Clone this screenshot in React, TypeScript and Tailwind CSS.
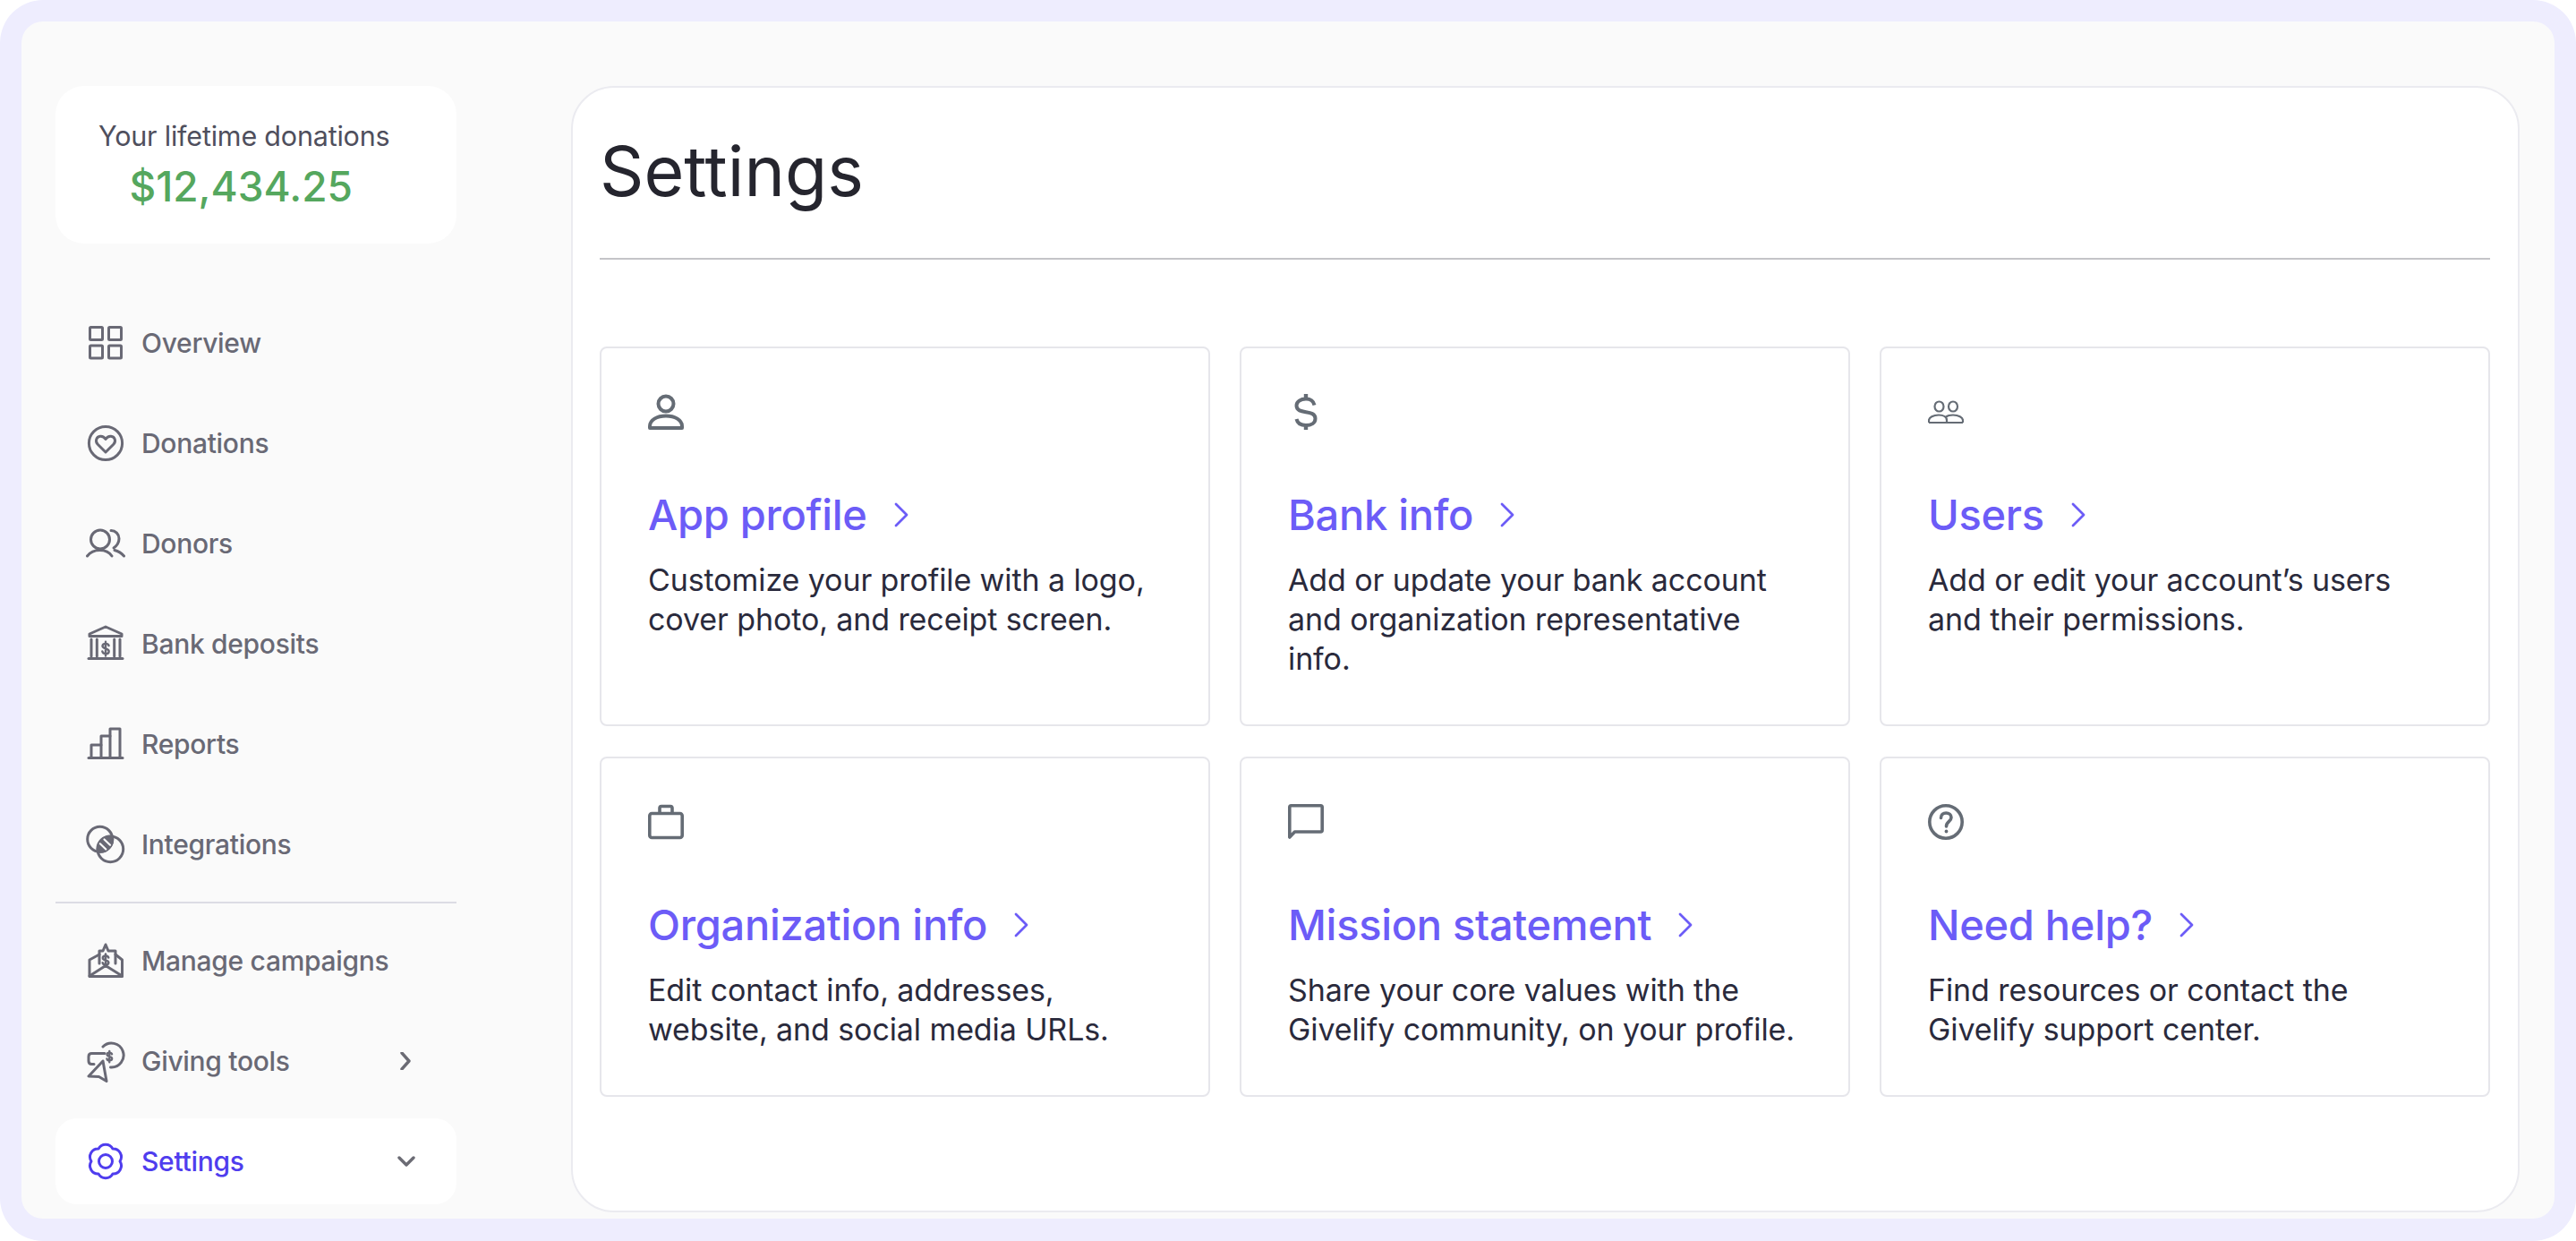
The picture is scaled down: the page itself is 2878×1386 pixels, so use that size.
import { ReactNode } from 'react'

const dollarPath =
  'M25.6 24.6C25.2 23 24 22.4 22 22.4C19.8 22.4 18.5 23.5 18.5 25.1C18.5 28.6 25.7 27.2 25.7 30.9C25.7 32.5 24.2 33.6 22 33.6C19.8 33.6 18.7 32.6 18.3 31M22 20.2V36'

const NavIcon = ({ children }: { children: ReactNode }) => (
  <svg
    viewBox="0 0 44 48"
    className="w-11 h-12 shrink-0"
    fill="none"
    stroke="currentColor"
    strokeWidth="3"
    strokeLinecap="round"
    strokeLinejoin="round"
  >
    {children}
  </svg>
)

const CardIcon = ({ children, stroke = '3.6' }: { children: ReactNode; stroke?: string }) => (
  <svg
    viewBox="0 0 40 40"
    className="w-10 h-10 text-[#656c75]"
    fill="none"
    stroke="currentColor"
    strokeWidth={stroke}
    strokeLinejoin="round"
  >
    {children}
  </svg>
)

const Chevron = () => (
  <svg viewBox="0 0 16 28" className="w-4 h-7 ml-[30px] shrink-0" fill="none" stroke="#6c5cf7" strokeWidth="2.8" strokeLinecap="round" strokeLinejoin="round">
    <path d="M2 2L14 14L2 26" />
  </svg>
)

const navTop = [
  {
    label: 'Overview',
    icon: (
      <>
        <rect x="4.5" y="6.5" width="14" height="14" rx="1" />
        <rect x="25.5" y="6.5" width="14" height="14" rx="1" />
        <rect x="4.5" y="27" width="14" height="14" rx="1" />
        <rect x="25.5" y="27" width="14" height="14" rx="1" />
      </>
    ),
  },
  {
    label: 'Donations',
    icon: (
      <>
        <circle cx="22" cy="24" r="18.6" />
        <path d="M22 34L13.2 25.3C10 22 11.5 16.6 16 16.2C18.6 16 20.6 17.2 22 19.4C23.4 17.2 25.4 16 28 16.2C32.5 16.6 34 22 30.8 25.3Z" />
      </>
    ),
  },
  {
    label: 'Donors',
    icon: (
      <>
        <circle cx="16" cy="19.5" r="10.5" />
        <path d="M1.5 38C5 33.5 10 31.5 15.5 31.5C21 31.5 26 33.5 29 38" />
        <path d="M28 9.5C33 9.5 37 13.5 37 18.5C37 23 34.5 26.5 31 29" />
        <path d="M32 31.5C36 32.5 39.5 34.5 42.5 38" />
      </>
    ),
  },
  {
    label: 'Bank deposits',
    icon: (
      <>
        <path d="M4 15.5V13L22 5L40 13V15.5Z" />
        <path d="M6 19V38M12.3 19V38M31.7 19V38M38 19V38" />
        <path d="M3 40.5H41" />
        <path d={dollarPath} transform="translate(0 1.5)" strokeWidth="2.4" />
      </>
    ),
  },
  {
    label: 'Reports',
    icon: (
      <>
        <path d="M3 39.5H41" />
        <path d="M6 39V25H17V39" />
        <path d="M17 25V15H27V39" />
        <path d="M27 15V7H38V39" />
      </>
    ),
  },
  {
    label: 'Integrations',
    icon: (
      <>
        <circle cx="15.7" cy="18.3" r="14" />
        <circle cx="27.3" cy="29.3" r="14.4" />
        <path d="M29.4 15.5A14 14 0 0 1 13.6 32.1A14 14 0 0 1 29.4 15.5Z" fill="currentColor" />
        <path d="M20.5 18.5L27 24.7M15.8 23.3L22.3 29.5" stroke="#fafafa" strokeWidth="2.2" />
      </>
    ),
  },
]

const navBottom = [
  {
    label: 'Manage campaigns',
    icon: (
      <>
        <path d="M15 27V13H19L22 6L25 13H33V27" />
        <path d="M15 17L4 23V41.5H40.5V23L33 17" />
        <path d="M4 41L22 29.5L40.5 41" />
        <path d={dollarPath} transform="translate(2.2 -1.7) scale(0.9)" strokeWidth="2.8" />
      </>
    ),
  },
  {
    label: 'Giving tools',
    icon: (
      <>
        <path d="M19 8A13.5 13.5 0 1 1 27.5 31" />
        <path d="M21 15.5H6.5Q3 15.5 3 19V24Q3 27.5 6.5 27.5H9" />
        <path d="M19 24L3 41L14.5 41.5L23 46.5Z" />
        <path d={dollarPath} transform="translate(9.1 -2.8) scale(0.78)" strokeWidth="3" />
      </>
    ),
    chevron: 'right',
  },
]

const cards = [
  {
    title: 'App profile',
    text: 'Customize your profile with a logo, cover photo, and receipt screen.',
    icon: (
      <CardIcon>
        <circle cx="20" cy="11" r="8.5" strokeWidth="4" />
        <path d="M2 38V36C2 29 10 24.5 20 24.5C30 24.5 38 29 38 36V38Z" strokeWidth="4" />
      </CardIcon>
    ),
  },
  {
    title: 'Bank info',
    text: 'Add or update your bank account and organization representative info.',
    icon: (
      <CardIcon stroke="4">
        <path d="M29.5 12.5C28.5 8 25 5.5 20 5.5C14 5.5 9.5 8.5 9.5 13C9.5 24 30.5 16.5 30.5 27.5C30.5 32.5 26 35 20 35C14.5 35 10.5 32.5 9.5 28" />
        <path d="M20 0V5.5M20 35V40" strokeWidth="4.4" />
      </CardIcon>
    ),
  },
  {
    title: 'Users',
    text: 'Add or edit your account’s users and their permissions.',
    icon: (
      <CardIcon stroke="2.2">
        <ellipse cx="12.5" cy="14" rx="5" ry="5.5" />
        <ellipse cx="28" cy="14" rx="5" ry="5.5" />
        <path d="M1 32V29.5C1 26 6 23.5 12 23.5C17.5 23.5 21 26 21 29.5V32" />
        <path d="M20 25.5C22 24 25 23.5 28 23.5C34 23.5 39 26 39 29.5V32" />
        <path d="M1 32H39" />
      </CardIcon>
    ),
  },
  {
    title: 'Organization info',
    text: 'Edit contact info, addresses, website, and social media URLs.',
    icon: (
      <CardIcon>
        <rect x="1.8" y="10.5" width="36.4" height="27" rx="2.5" />
        <path d="M13 10V4.5Q13 2.5 15 2.5H25Q27 2.5 27 4.5V10" />
      </CardIcon>
    ),
  },
  {
    title: 'Mission statement',
    text: 'Share your core values with the Givelify community, on your profile.',
    icon: (
      <CardIcon>
        <path d="M1.8 37V3.5Q1.8 1.8 3.5 1.8H36.5Q38.2 1.8 38.2 3.5V29Q38.2 31 36.5 31H7.5Z" />
      </CardIcon>
    ),
  },
  {
    title: 'Need help?',
    text: 'Find resources or contact the Givelify support center.',
    icon: (
      <CardIcon>
        <circle cx="20" cy="20" r="18.2" />
        <path d="M14.5 15.5C14.5 12 17 10 20.2 10C23.5 10 26 12 26 15C26 19.5 20.5 19.5 20.5 25" strokeLinecap="round" />
        <circle cx="20.5" cy="30.5" r="1.2" fill="currentColor" strokeWidth="1.5" />
      </CardIcon>
    ),
  },
]

const NavRow = ({ label, icon, chevron }: { label: string; icon: ReactNode; chevron?: string }) => (
  <div className="flex items-center h-24 pl-[34px] pr-[46px] gap-[18px] text-[#696975]">
    <NavIcon>{icon}</NavIcon>
    <span className="text-[30px] font-medium tracking-[-0.3px]">{label}</span>
    {chevron && (
      <svg viewBox="0 0 20 20" className="w-5 h-5 ml-auto" fill="none" stroke="#6b6b74" strokeWidth="3.4" strokeLinecap="round" strokeLinejoin="round">
        <path d="M5 1L13 10L5 19" />
      </svg>
    )}
  </div>
)

const App = () => {
  return (
    <div className="h-screen bg-white font-['Inter',sans-serif]">
      <div className="h-full bg-[#eeedfe] rounded-[48px] pt-6 px-6 pb-[25px]">
        <div className="h-full flex bg-[#fafafa] rounded-[24px] pl-[38px] pr-[39px] pt-[72px] pb-[7px]">
          {/* SIDEBAR */}
          <div className="w-[448px] shrink-0 flex flex-col">
            <div className="h-[176px] bg-white rounded-[32px] pt-[36px] pl-[48px]">
              <div className="inline-flex flex-col items-center gap-2">
                <span className="text-[30.5px] leading-10 text-[#4f4f5d] tracking-[-0.2px]">Your lifetime donations</span>
                <span className="pr-[7px] text-[46px] leading-[56px] font-medium text-[#55a75e]">$12,434.25</span>
              </div>
            </div>

            <div className="mt-[63px] flex flex-col gap-4">
              {navTop.map(item => (
                <NavRow key={item.label} label={item.label} icon={item.icon} />
              ))}
            </div>

            <div className="my-4 border-t-2 border-[#dcdce4]" />

            <div className="flex flex-col gap-4">
              {navBottom.map(item => (
                <NavRow key={item.label} label={item.label} icon={item.icon} chevron={item.chevron} />
              ))}
              <div className="flex items-center h-24 pl-[34px] pr-[46px] gap-[18px] bg-white rounded-[24px] text-[#4f3dee]">
                <NavIcon>
                  <path d="M30 10.1A9 9 0 0 1 38 24A9 9 0 0 1 30 37.9A9 9 0 0 1 14 37.9A9 9 0 0 1 6 24A9 9 0 0 1 14 10.1A9 9 0 0 1 30 10.1Z" />
                  <circle cx="22" cy="24" r="7.5" />
                </NavIcon>
                <span className="text-[30px] font-medium tracking-[-0.3px]">Settings</span>
                <svg viewBox="0 0 20 14" className="w-5 h-3.5 ml-auto" fill="none" stroke="#6b6b74" strokeWidth="3.4" strokeLinecap="round" strokeLinejoin="round">
                  <path d="M2 3L10 11L18 3" />
                </svg>
              </div>
            </div>
          </div>

          {/* MAIN */}
          <div className="ml-[128px] flex-1 bg-white border-2 border-[#ebebf0] rounded-[48px] pl-[30px] pr-[31px] pt-[45px]">
            <div className="pb-[49px] border-b-2 border-[#c4c4c8]">
              <h1 className="text-[77px] leading-[96px] text-[#25252e]">Settings</h1>
            </div>

            <div className="mt-[97px] grid grid-cols-3 gap-x-[33px] gap-y-[34px]">
              {cards.map(card => (
                <div key={card.title} className="border-2 border-[#e6e6eb] rounded-[8px] pt-[51px] pb-[51px] pl-[52px] pr-[30px]">
                  {card.icon}
                  <div className="mt-[65px] flex items-center h-[60px]">
                    <span className="text-[47px] font-medium text-[#6c5cf7] tracking-[-0.3px]">{card.title}</span>
                    <Chevron />
                  </div>
                  <p className="mt-[21px] max-w-[570px] text-[34px] leading-[44px] text-[#2a2a3c] tracking-[-0.1px]">{card.text}</p>
                </div>
              ))}
            </div>
          </div>
        </div>
      </div>
    </div>
  )
}

export default App
